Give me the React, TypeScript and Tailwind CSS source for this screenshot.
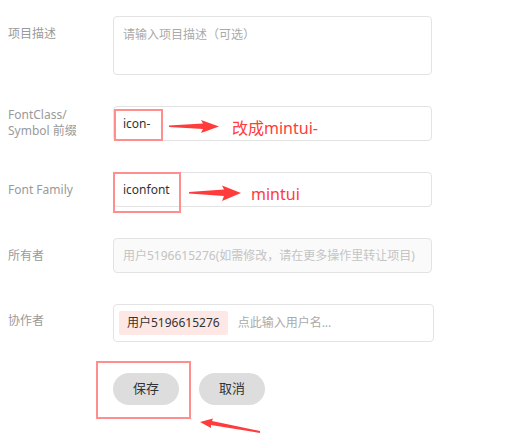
import React from "react";

const font = { fontFamily: '"Noto Sans", "Noto Sans CJK SC", sans-serif' };

function Label({ children, className = "" }: { children: React.ReactNode; className?: string }) {
  return (
    <div className={`w-[113px] shrink-0 pl-2 text-[12px] leading-4 text-[#9a9a9a] ${className}`}>{children}</div>
  );
}

export default function App() {
  return (
    <div className="relative h-[442px] w-[528px] overflow-hidden bg-white" style={font}>
      <div className="flex flex-col pt-[16px]">
        {/* 项目描述 */}
        <div className="flex">
          <Label className="pt-[10px]">项目描述</Label>
          <div className="h-[59px] w-[319px] rounded-[4px] border border-[#e3e3e3] px-[9px] pt-[10px] text-[12px] leading-4 text-[#aaaaaa]">
            请输入项目描述（可选）
          </div>
        </div>

        {/* FontClass */}
        <div className="mt-[31px] flex">
          <Label className="pt-[1px]">
            FontClass/
            <br />
            Symbol 前缀
          </Label>
          <div className="flex h-[35px] w-[319px] items-center rounded-[4px] border border-[#e3e3e3] pl-[9px] text-[12px] text-[#333333]">
            icon-
          </div>
        </div>

        {/* Font Family */}
        <div className="mt-[31px] flex items-center">
          <Label>Font Family</Label>
          <div className="flex h-[35px] w-[319px] items-center rounded-[4px] border border-[#e3e3e3] pl-[9px] text-[12px] text-[#333333]">
            iconfont
          </div>
        </div>

        {/* 所有者 */}
        <div className="mt-[31px] flex items-center">
          <Label>所有者</Label>
          <div className="flex h-[35px] w-[319px] items-center rounded-[4px] border border-[#e3e3e3] bg-[#fafafa] pl-[9px] text-[12px] text-[#c4c4c4]">
            用户5196615276(如需修改，请在更多操作里转让项目)
          </div>
        </div>

        {/* 协作者 */}
        <div className="mt-[31px] flex">
          <Label className="pt-[9px]">协作者</Label>
          <div className="flex h-[38px] w-[321px] items-center rounded-[4px] border border-[#e3e3e3] pl-[5px] text-[12px]">
            <span className="flex h-[24px] items-center rounded-[2px] bg-[#fde8e6] px-[8px] text-[12px] text-[#333333]">
              用户5196615276
            </span>
            <span className="ml-[10px] text-[#aaaaaa]">点此输入用户名...</span>
          </div>
        </div>

        {/* buttons */}
        <div className="mt-[31px] flex gap-[20px] pl-[113px]">
          <button className="h-[32px] w-[66px] rounded-full bg-[#dddddd] text-[13px] text-[#333333]">保存</button>
          <button className="h-[32px] w-[66px] rounded-full bg-[#dddddd] text-[13px] text-[#333333]">取消</button>
        </div>
      </div>

      {/* annotations */}
      <div className="pointer-events-none absolute left-[114px] top-[109px] h-[32px] w-[49px] border-2 border-[#ff8f8f]" />
      <div className="pointer-events-none absolute left-[113px] top-[172px] h-[41px] w-[68px] border-2 border-[#ff8f8f]" />
      <div className="pointer-events-none absolute left-[96px] top-[361px] h-[58px] w-[95px] border-2 border-[#ff8f8f]" />

      <div className="pointer-events-none absolute left-[232px] top-[118px] text-[16px] leading-5 text-[#ff3b3b]">
        改成mintui-
      </div>
      <div className="pointer-events-none absolute left-[251px] top-[184px] text-[16px] leading-5 text-[#ff3b3b]">
        mintui
      </div>

      <svg className="pointer-events-none absolute left-0 top-0" width="528" height="442" viewBox="0 0 528 442">
        <polygon points="169,125.5 203,123.5 201,120 219,126.5 201,133 203,129 169,127" fill="#ff3b3b" />
        <polygon points="189,192 224,189.5 222,185.5 241,193 222,201 224,196 189,193.5" fill="#ff3b3b" />
        <polygon points="200,422 213,418.5 212,421 260,431 260,433 211,425 211,428" fill="#ff3b3b" />
      </svg>
    </div>
  );
}
